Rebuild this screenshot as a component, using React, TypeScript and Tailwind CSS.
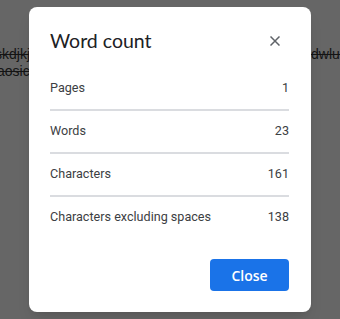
import React from "react";

const rows = [
  { label: "Pages", value: "1" },
  { label: "Words", value: "23" },
  { label: "Characters", value: "161" },
  { label: "Characters excluding spaces", value: "138" },
];

export default function App() {
  return (
    <div className="relative h-[319px] w-[340px] overflow-hidden bg-[#666666]">
      {/* document text dimmed behind the overlay */}
      <div className="pt-[46px] text-[14px] leading-[17px] text-[#141414] line-through" style={{ fontFamily: '"Liberation Sans", Arial, sans-serif' }}>
        <div className="flex justify-between">
          <span className="ml-[-5px]">skdjkjasd</span>
          <span className="w-[29px] whitespace-pre">dwlu   </span>
        </div>
        <div className="ml-[-3px]">aosicxa</div>
      </div>

      <div
        className="absolute left-[29px] top-[7px] w-[282px] rounded-lg bg-white pb-[21px] pl-[21px] pr-[22px] pt-[20px] shadow-lg"
        style={{ fontFamily: 'Roboto, "Noto Sans", sans-serif' }}
      >
        <div className="flex h-[28px] items-center justify-between">
          <h2 className="text-[19.5px] leading-[28px] text-[#202124]" style={{ fontFamily: 'Lato, Roboto, sans-serif' }}>
            Word count
          </h2>
          <svg width="10" height="10" viewBox="0 0 10 10" className="mr-[9px]">
            <path d="M0.5 0.5 L9.5 9.5 M9.5 0.5 L0.5 9.5" stroke="#5f6368" strokeWidth="1.5" />
          </svg>
        </div>

        <div className="mt-[13px]">
          {rows.map((r, i) => (
            <div
              key={r.label}
              className={`flex justify-between pt-[10px] text-[12.6px] leading-5 text-[#3c4043] ${
                i < rows.length - 1 ? "border-b-2 border-[#dadce0] pb-[11px]" : ""
              }`}
            >
              <span>{r.label}</span>
              <span>{r.value}</span>
            </div>
          ))}
        </div>

        <div className="mt-[32px] flex justify-end">
          <button className="h-[32px] w-[79px] rounded bg-[#1a73e8] text-[14px] font-semibold text-white" style={{ fontFamily: '"Open Sans", Roboto, sans-serif' }}>
            Close
          </button>
        </div>
      </div>
    </div>
  );
}
